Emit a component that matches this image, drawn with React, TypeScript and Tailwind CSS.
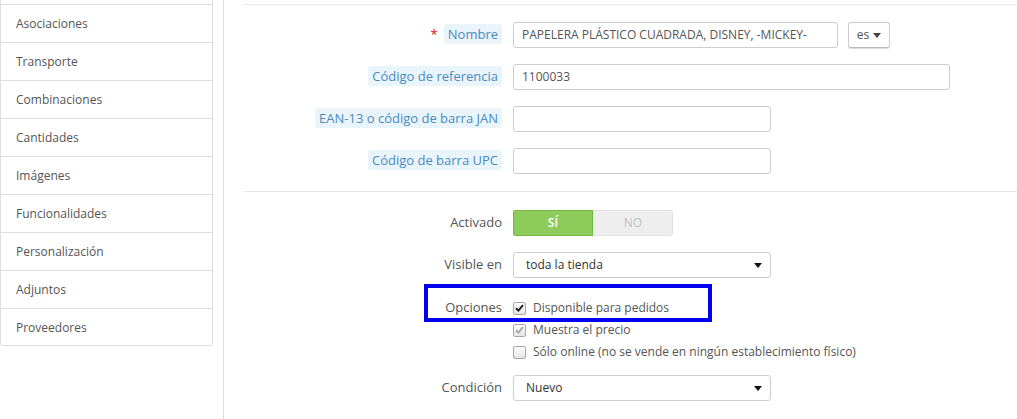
import React from 'react'

const MENU = [
  'Asociaciones',
  'Transporte',
  'Combinaciones',
  'Cantidades',
  'Imágenes',
  'Funcionalidades',
  'Personalización',
  'Adjuntos',
  'Proveedores',
]

function Tip({ children }: { children: React.ReactNode }) {
  return (
    <span className="rounded-[3px] bg-[#eaf4fb] px-[4px] py-[1px] text-[#4a8bbf]">{children}</span>
  )
}

function Caret({ className = '' }: { className?: string }) {
  return (
    <svg width="8" height="5" viewBox="0 0 8 5" className={className}>
      <path d="M0 0h8L4 5z" fill="currentColor" />
    </svg>
  )
}

function Select({ value }: { value: string }) {
  return (
    <div className="flex h-[26px] w-[258px] items-center justify-between rounded-[3px] border border-[#ccc] bg-white pl-[12px] pr-[8px] text-[12px] text-[#333]">
      <span>{value}</span>
      <Caret className="text-[#111]" />
    </div>
  )
}

function Check({ state }: { state: 'on' | 'disabled' | 'off' }) {
  return (
    <span className="flex h-[13px] w-[13px] items-center justify-center rounded-[2px] border border-[#a9a9a9] bg-gradient-to-b from-[#fdfdfd] to-[#e6e6e6]">
      {state !== 'off' && (
        <svg width="9" height="8" viewBox="0 0 9 8">
          <path
            d="M1 4.2l2.4 2.4L8 1.2"
            fill="none"
            stroke={state === 'on' ? '#222' : '#a8a8a8'}
            strokeWidth="2"
          />
        </svg>
      )}
    </span>
  )
}

export default function App() {
  return (
    <div
      className="flex h-[419px] w-full overflow-hidden bg-white text-[#555]"
      style={{ fontFamily: '"Open Sans", "Liberation Sans", sans-serif' }}
    >
      {/* left menu, top row cut off */}
      <div className="w-[213px] flex-none">
        <div className="h-[4px] border-x border-[#ddd]" />
        {MENU.map((item, i) => (
          <div
            key={item}
            className={
              'flex h-[38px] items-center border-x border-t border-[#ddd] pt-px pl-[15px] text-[12px] text-[#555] ' +
              (i === MENU.length - 1 ? 'rounded-b-[3px] border-b' : '')
            }
          >
            {item}
          </div>
        ))}
      </div>

      <div className="ml-[10px] flex-1 border-l border-[#ddd] pl-[20px]">
        <div className="mt-[4px] h-px bg-[#e6e6e6]" />

        <div className="grid grid-cols-[258px_1fr] items-center gap-x-[11px] gap-y-[16px] pt-[17px] pb-[17px] text-[13px]">
          <div className="text-right">
            <span className="mr-[6px] text-[#e00]">*</span>
            <Tip>Nombre</Tip>
          </div>
          <div className="flex items-center">
            <div className="flex h-[26px] w-[325px] items-center rounded-[3px] border border-[#ccc] pl-[8px] text-[12px] text-[#555]">
              PAPELERA PLÁSTICO CUADRADA, DISNEY, -MICKEY-
            </div>
            <div className="ml-[10px] flex h-[26px] w-[42px] items-center justify-center gap-[4px] rounded-[3px] border border-[#ccc] border-b-[#bbb] text-[12px] text-[#555] shadow-[0_1px_0_#ddd]">
              es
              <Caret className="text-[#444]" />
            </div>
          </div>

          <div className="text-right">
            <Tip>Código de referencia</Tip>
          </div>
          <div className="flex h-[26px] w-[437px] items-center rounded-[3px] border border-[#ccc] pl-[8px] text-[12px] text-[#555]">
            1100033
          </div>

          <div className="text-right">
            <Tip>EAN-13 o código de barra JAN</Tip>
          </div>
          <div className="h-[26px] w-[258px] rounded-[3px] border border-[#ccc]" />

          <div className="text-right">
            <Tip>Código de barra UPC</Tip>
          </div>
          <div className="h-[26px] w-[258px] rounded-[3px] border border-[#ccc]" />
        </div>

        <div className="h-px bg-[#e6e6e6]" />

        <div className="grid grid-cols-[258px_1fr] items-center gap-x-[11px] pt-[18px] text-[13px]">
          <div className="text-right">Activado</div>
          <div className="flex h-[26px] w-[160px] overflow-hidden rounded-[3px] text-[12px] font-semibold">
            <div className="flex w-[80px] items-center justify-center border border-[#79b846] bg-[#8dcb5a] text-white">
              SÍ
            </div>
            <div className="flex flex-1 items-center justify-center border border-[#e2e2e2] bg-[#eee] font-normal text-[#c0c0c0]">
              NO
            </div>
          </div>

          <div className="mt-[16px] text-right">Visible en</div>
          <div className="mt-[16px]">
            <Select value="toda la tienda" />
          </div>

          <div className="relative col-span-2 mt-[19px] grid grid-cols-[258px_1fr] gap-x-[11px]">
            <div className="flex h-[22px] items-center justify-end">Opciones</div>
            <div className="flex flex-col text-[12px]">
              <div className="flex h-[22px] items-center gap-[7px]">
                <Check state="on" />
                <span>Disponible para pedidos</span>
              </div>
              <div className="flex h-[22px] items-center gap-[7px]">
                <Check state="disabled" />
                <span>Muestra el precio</span>
              </div>
              <div className="flex h-[22px] items-center gap-[7px]">
                <Check state="off" />
                <span>Sólo online (no se vende en ningún establecimiento físico)</span>
              </div>
            </div>
            <div className="absolute left-[180px] top-[-13px] h-[38px] w-[288px] border-[4px] border-[#0000ee]" />
          </div>

          <div className="mt-[12px] text-right">Condición</div>
          <div className="mt-[12px]">
            <Select value="Nuevo" />
          </div>
        </div>
      </div>
    </div>
  )
}
